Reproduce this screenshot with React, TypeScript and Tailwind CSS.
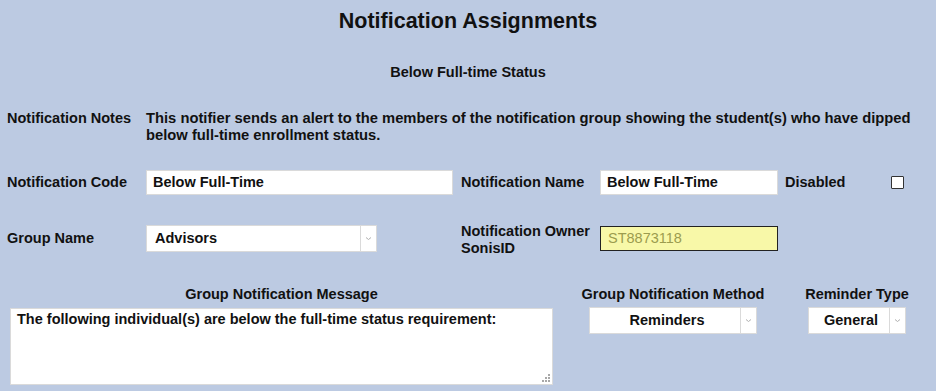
import React from 'react';

const Chevron: React.FC = () => (
  <svg width="7" height="5" viewBox="0 0 7 5" className="text-[#b0b0b0]">
    <path d="M1 1.5 L3.5 3.5 L6 1.5" fill="none" stroke="currentColor" strokeWidth="1" />
  </svg>
);

// Fake select box, drawn flat like the old browser control
const SelectBox: React.FC<{ value: string; width: string; center?: boolean }> = ({ value, width, center }) => (
  <div className={`${width} h-[27px] flex bg-white border border-[#dadada]`}>
    <div className={`flex-1 flex items-center ${center ? 'justify-center pl-[4px]' : 'pl-[8px]'}`}>{value}</div>
    <div className="w-[16px] border-l border-[#dadada] flex items-center justify-center">
      <Chevron />
    </div>
  </div>
);

const App: React.FC = () => {
  return (
    <div
      className="w-full h-[391px] bg-[#bccae2] text-[#111] font-bold text-[14.5px] leading-[17px] overflow-hidden"
      style={{ fontFamily: '"Liberation Sans", Arial, sans-serif' }}
    >
      <h1 className="pt-[9px] text-center text-[21.5px] leading-[24px]">Notification Assignments</h1>

      <div className="mt-[31px] text-center">Below Full-time Status</div>

      <div className="mt-[29px] flex pl-[7px]">
        <div className="w-[139px] shrink-0">Notification Notes</div>
        <div className="w-[785px] text-[14.75px]">
          This notifier sends an alert to the members of the notification group showing the student(s) who have dipped
          below full-time enrollment status.
        </div>
      </div>

      {/* Code / Name row */}
      <div className="mt-[26px] flex items-center pl-[7px] h-[25px]">
        <div className="w-[139px] shrink-0">Notification Code</div>
        <div className="w-[307px] h-[25px] bg-white border border-[#dadada] flex items-center pl-[6px]">Below Full-Time</div>
        <div className="ml-[8px] w-[139px] shrink-0">Notification Name</div>
        <div className="w-[178px] h-[25px] bg-white border border-[#dadada] flex items-center pl-[6px]">Below Full-Time</div>
        <div className="ml-[7px] w-[106px] shrink-0">Disabled</div>
        <div className="w-[13px] h-[13px] bg-white border border-[#333] rounded-[1px]" />
      </div>

      {/* Group / Owner row */}
      <div className="mt-[30px] flex items-center pl-[7px] h-[27px]">
        <div className="w-[139px] shrink-0">Group Name</div>
        <SelectBox value="Advisors" width="w-[231px]" />
        <div className="ml-[84px] w-[139px] shrink-0 mt-[3px]">
          Notification Owner
          <br />
          SonisID
        </div>
        <div className="w-[178px] h-[25px] bg-[#f8f8a8] border border-[#222] flex items-center pl-[7px] text-[#9c9c4e] font-normal">
          ST8873118
        </div>
      </div>

      {/* Bottom section */}
      <div className="mt-[34px] flex">
        <div className="ml-[10px] w-[543px]">
          <div className="text-center">Group Notification Message</div>
          <div className="relative mt-[5px] h-[77px] bg-white border border-[#dadada] px-[6px] pt-[2px]">
            The following individual(s) are below the full-time status requirement:
            <svg width="8" height="8" viewBox="0 0 8 8" className="absolute right-[2px] bottom-[2px]">
              <g fill="#a8a8a8">
                <rect x="6" y="0" width="2" height="2" />
                <rect x="3" y="3" width="2" height="2" />
                <rect x="6" y="3" width="2" height="2" />
                <rect x="0" y="6" width="2" height="2" />
                <rect x="3" y="6" width="2" height="2" />
                <rect x="6" y="6" width="2" height="2" />
              </g>
            </svg>
          </div>
        </div>
        <div className="ml-[28px] w-[184px] flex flex-col items-center">
          <div className="whitespace-nowrap">Group Notification Method</div>
          <div className="mt-[4px]">
            <SelectBox value="Reminders" width="w-[168px]" center />
          </div>
        </div>
        <div className="ml-[41px] w-[102px] flex flex-col items-center">
          <div className="whitespace-nowrap">Reminder Type</div>
          <div className="mt-[4px]">
            <SelectBox value="General" width="w-[98px]" center />
          </div>
        </div>
      </div>
    </div>
  );
};

export default App;
